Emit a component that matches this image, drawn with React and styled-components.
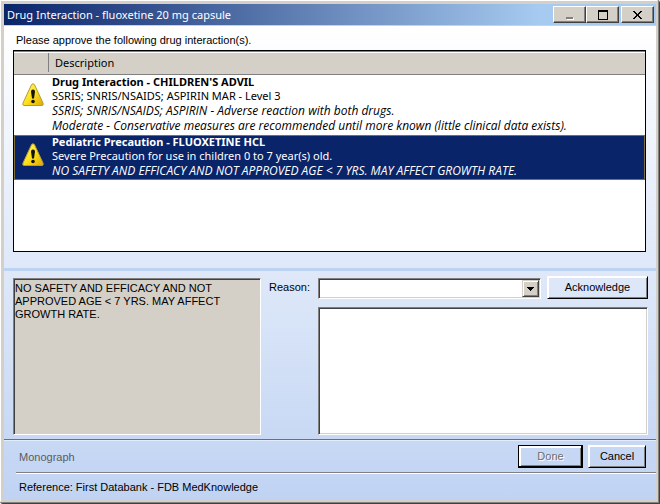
import React, { useState } from 'react';
import styled, { createGlobalStyle } from 'styled-components';

const GlobalStyle = createGlobalStyle`
    * {
        box-sizing: border-box;
    }

    body {
        margin: 0;
        background-color: #ffffff;
        color: #000000;
        font-family: "Liberation Sans", Arial, sans-serif;
        font-size: 11px;
        line-height: 13px;
    }
`;

const Window = styled.main`
    display: flex;
    flex-direction: column;
    min-height: 100vh;
    padding: 1px;
    background-color: #d4d0c8;
    border-right: 1px solid #404040;
    border-bottom: 1px solid #404040;
    border-top-right-radius: 3px;
    border-bottom-left-radius: 3px;
    box-shadow: inset 1px 1px 0 #ffffff, inset -1px -1px 0 #808080;
`;

const Frame = styled.div`
    flex: 1;
    display: flex;
    flex-direction: column;
    padding: 3px 2px 2px 3px;
`;

const TitleBar = styled.header`
    display: flex;
    align-items: center;
    justify-content: space-between;
    height: 22px;
    padding: 0 2px 0 3px;
    border-bottom: 1px solid #d4d0c8;
    background: linear-gradient(to right, #0a246a, #a6caf0 82%);
`;

const Title = styled.h1`
    margin: 0;
    color: #ffffff;
    font-family: "Noto Sans", "Open Sans", sans-serif;
    font-size: 11px;
    font-weight: 400;
    line-height: 16px;
`;

const WindowButtons = styled.div`
    display: flex;
`;

const WindowButton = styled.button`
    display: flex;
    align-items: center;
    justify-content: center;
    width: 33px;
    height: 17px;
    padding: 0;
    border: 1px solid;
    border-color: #ffffff #404040 #404040 #ffffff;
    background-color: #d4d0c8;
    box-shadow: inset -1px -1px 0 #808080;

    &:last-child {
        margin-left: 2px;
    }
`;

const Body = styled.div`
    flex: 1;
    display: flex;
    flex-direction: column;
    background: linear-gradient(to bottom, #ffffff, #c0d3f3);
`;

const Upper = styled.section`
    flex: 1;
    display: flex;
    flex-direction: column;
    gap: 3px;
    padding: 8px 10px 16px 9px;
`;

const Prompt = styled.p`
    margin: 0;
    padding-left: 3px;
`;

const ListBox = styled.div`
    flex: 1;
    border: 1px solid #000000;
    background-color: #ffffff;
`;

const List = styled.table`
    width: 100%;
    border-collapse: collapse;
    font-family: "Noto Sans", "Open Sans", sans-serif;
    font-size: 11px;
    line-height: 14px;
`;

const HeadCell = styled.th`
    height: 23px;
    padding: 0 0 0 6px;
    border: solid #808080;
    border-width: 1px 0;
    background-color: #d4d0c8;
    background-image: linear-gradient(#808080, #808080);
    background-repeat: no-repeat;
    background-size: ${({ $icon }) => ($icon ? '1px 19px' : '0 0')};
    background-position: right 1px;
    box-shadow: inset 0 1px 0 #ffffff;
    width: ${({ $icon }) => ($icon ? '35px' : 'auto')};
    font-weight: 400;
    text-align: left;
`;

const Row = styled.tr`
    background-color: ${({ $selected }) => ($selected ? '#0a246a' : '#ffffff')};
    color: ${({ $selected }) => ($selected ? '#ffffff' : '#000000')};
    outline: ${({ $selected }) => ($selected ? '1px solid #80703c' : 'none')};
    outline-offset: -1px;
`;

const IconCell = styled.td`
    padding: 8px 0 0 8px;
    vertical-align: top;

    svg {
        display: block;
    }
`;

const TextCell = styled.td`
    padding: 0 0 2px 3px;
`;

const Line = styled.div`
    font-weight: ${({ $bold }) => ($bold ? 700 : 400)};
`;

const NoteLine = styled(Line)`
    font-family: "Open Sans", "Noto Sans", sans-serif;
    font-size: 12px;
    font-style: italic;
    line-height: 15px;
`;

const Lower = styled.section`
    display: grid;
    grid-template-columns: 248fr 330fr;
    column-gap: 57px;
    padding: 5px 8px 4px 9px;
    border-top: 3px solid #bdd3f4;
`;

const sunken = `
    border: 1px solid;
    border-color: #808080 #ffffff #ffffff #808080;
    box-shadow: inset 1px 1px 0 #404040, inset -1px -1px 0 #d4d0c8;
`;

const Details = styled.textarea`
    ${sunken}
    display: block;
    width: 100%;
    margin-top: 2px;
    padding: 3px 1px;
    border-radius: 0;
    background-color: #d4d0c8;
    color: #000000;
    font-family: inherit;
    font-size: 11px;
    line-height: 13px;
    resize: none;
    outline: none;
`;

const Form = styled.div`
    display: flex;
    flex-direction: column;
    gap: 8px;
`;

const ReasonRow = styled.div`
    display: flex;
    align-items: center;
    gap: 6px;
    margin-left: -49px;
`;

const ReasonLabel = styled.label`
    width: 43px;
`;

const SelectBox = styled.div`
    ${sunken}
    flex: 1;
    display: grid;
    height: 21px;
    margin-top: 2px;
    padding: 1px;
    background-color: #ffffff;

    > * {
        grid-area: 1 / 1;
    }
`;

const Select = styled.select`
    width: 100%;
    padding: 0 20px 0 2px;
    border: none;
    appearance: none;
    background: transparent;
    font-family: inherit;
    font-size: 11px;
    outline: none;
`;

const DropArrow = styled.span`
    display: flex;
    align-items: center;
    justify-content: center;
    justify-self: end;
    width: 17px;
    border: 1px solid;
    border-color: #d4d0c8 #404040 #404040 #d4d0c8;
    background-color: #d4d0c8;
    box-shadow: inset 1px 1px 0 #ffffff, inset -1px -1px 0 #808080;
    pointer-events: none;
`;

const Notes = styled.textarea`
    ${sunken}
    display: block;
    width: 100%;
    height: 128px;
    padding: 3px;
    border-radius: 0;
    background-color: #ffffff;
    font-family: inherit;
    font-size: 11px;
    resize: none;
    outline: none;
`;

const Button = styled.button`
    width: ${({ $width }) => $width};
    height: 23px;
    padding: 0;
    border: 1px solid;
    border-color: ${({ $primary }) => ($primary ? '#000000' : '#ffffff #000000 #000000 #ffffff')};
    background-color: transparent;
    box-shadow: ${({ $primary }) =>
        $primary
            ? 'inset -1px -1px 0 #000000, inset 2px 2px 0 #ffffff, inset -2px -2px 0 #808080'
            : 'inset 1px 1px 0 #ffffff, inset -1px -1px 0 #808080'};
    color: #000000;
    font-family: inherit;
    font-size: 11px;
    line-height: 13px;

    &:disabled {
        color: #6d6d6d;
        text-shadow: 1px 1px 0 #ffffff;
    }
`;

const Actions = styled.div`
    display: flex;
    align-items: center;
    gap: 5px;
    height: 33px;
    padding: 1px 10px 0 15px;
    border-top: 1px solid #3c78d0;
    box-shadow: inset 0 1px 0 #e4edfb;
`;

const Monograph = styled.button`
    margin-right: auto;
    padding: 2px 0 0;
    border: none;
    background: none;
    font-family: inherit;
    font-size: 11px;
    line-height: 13px;

    &:disabled {
        color: #5c5c5c;
    }
`;

const Reference = styled.footer`
    height: 28px;
    margin-left: 12px;
    padding: 8px 3px;
    border-top: 1px solid #808080;
    box-shadow: inset 0 1px 0 #ffffff;
`;

const interactions = [
    {
        title: "Drug Interaction - CHILDREN'S ADVIL",
        summary: 'SSRIS; SNRIS/NSAIDS; ASPIRIN MAR - Level 3',
        notes: [
            'SSRIS; SNRIS/NSAIDS; ASPIRIN - Adverse reaction with both drugs.',
            'Moderate - Conservative measures are recommended until more known (little clinical data exists).'
        ],
        detail: 'SSRIS; SNRIS/NSAIDS; ASPIRIN - Adverse reaction with both drugs.'
    },
    {
        title: 'Pediatric Precaution - FLUOXETINE HCL',
        summary: 'Severe Precaution for use in children 0 to 7 year(s) old.',
        notes: ['NO SAFETY AND EFFICACY AND NOT APPROVED AGE < 7 YRS. MAY AFFECT GROWTH RATE.'],
        detail: 'NO SAFETY AND EFFICACY AND NOT APPROVED AGE < 7 YRS. MAY AFFECT GROWTH RATE.'
    }
];

function WarningIcon() {
    return (
        <svg width="22" height="24" viewBox="0 0 22 24" aria-hidden="true">
            <defs>
                <linearGradient id="warning" x1="0" y1="0" x2="1" y2="1">
                    <stop offset="0" stopColor="#fff680" />
                    <stop offset="0.5" stopColor="#ffe21c" />
                    <stop offset="1" stopColor="#dfa800" />
                </linearGradient>
            </defs>
            <path d="M9.6 1.5Q11 0 12.4 1.5L21 20Q21.8 22.5 20 22.5H2Q.2 22.5 1 20Z" fill="url(#warning)" stroke="#b69a3c" strokeWidth="1" />
            <path d="M9 8.5Q9 6.5 11 6.5T13 8.5L12 15.5H10Z" fill="#161200" />
            <circle cx="11" cy="18.5" r="1.8" fill="#161200" />
        </svg>
    );
}

export default function App() {

    const [selected, setSelected] = useState(1);
    const [notes, setNotes] = useState('');

    return (
        <>
            <GlobalStyle />
            <Window>
                <Frame>
                    <TitleBar>
                        <Title>Drug Interaction - fluoxetine 20 mg capsule</Title>
                        <WindowButtons>
                            <WindowButton aria-label="Minimize" disabled>
                                <svg width="10" height="10" shapeRendering="crispEdges">
                                    <path d="M2 8H9V10H2Z" fill="#ffffff" />
                                    <path d="M1 7H8V9H1Z" fill="#808080" />
                                </svg>
                            </WindowButton>
                            <WindowButton aria-label="Maximize">
                                <svg width="10" height="10" shapeRendering="crispEdges">
                                    <path d="M0 0H10V10H0ZM1 2V9H9V2Z" fill="#000000" fillRule="evenodd" />
                                </svg>
                            </WindowButton>
                            <WindowButton aria-label="Close">
                                <svg width="10" height="10" shapeRendering="crispEdges">
                                    <path d="M0 1h2v1h1v1h1v1h1v-1h1v-1h1v-1h2v1h-1v1h-1v1h-1v2h1v1h1v1h1v1h-2v-1h-1v-1h-1v-1h-1v1h-1v1h-1v1h-2v-1h1v-1h1v-1h1v-2h-1v-1h-1v-1h-1Z" fill="#000000" />
                                </svg>
                            </WindowButton>
                        </WindowButtons>
                    </TitleBar>
                    <Body>
                        <Upper>
                            <Prompt>Please approve the following drug interaction(s).</Prompt>
                            <ListBox>
                                <List>
                                    <thead>
                                        <tr>
                                            <HeadCell $icon aria-label="Severity" />
                                            <HeadCell>Description</HeadCell>
                                        </tr>
                                    </thead>
                                    <tbody>
                                        {interactions.map((item, index) => (
                                            <Row key={item.title} $selected={index === selected} onClick={() => setSelected(index)}>
                                                <IconCell><WarningIcon /></IconCell>
                                                <TextCell>
                                                    <Line $bold>{item.title}</Line>
                                                    <Line>{item.summary}</Line>
                                                    {item.notes.map((note) => (
                                                        <NoteLine key={note}>{note}</NoteLine>
                                                    ))}
                                                </TextCell>
                                            </Row>
                                        ))}
                                    </tbody>
                                </List>
                            </ListBox>
                        </Upper>
                        <Lower>
                            <Details readOnly aria-label="Interaction details" value={interactions[selected].detail} />
                            <Form>
                                <ReasonRow>
                                    <ReasonLabel htmlFor="reason">Reason:</ReasonLabel>
                                    <SelectBox>
                                        <Select id="reason" />
                                        <DropArrow>
                                            <svg width="7" height="4" shapeRendering="crispEdges">
                                                <path d="M0 0H7V1H6V2H5V3H4V4H3V3H2V2H1V1H0Z" fill="#000000" />
                                            </svg>
                                        </DropArrow>
                                    </SelectBox>
                                    <Button $width="101px">Acknowledge</Button>
                                </ReasonRow>
                                <Notes aria-label="Reason notes" value={notes} onChange={(event) => setNotes(event.target.value)} />
                            </Form>
                        </Lower>
                        <Actions>
                            <Monograph disabled>Monograph</Monograph>
                            <Button $width="65px" $primary disabled>Done</Button>
                            <Button $width="58px">Cancel</Button>
                        </Actions>
                        <Reference>Reference: First Databank - FDB MedKnowledge</Reference>
                    </Body>
                </Frame>
            </Window>
        </>
    );

}
